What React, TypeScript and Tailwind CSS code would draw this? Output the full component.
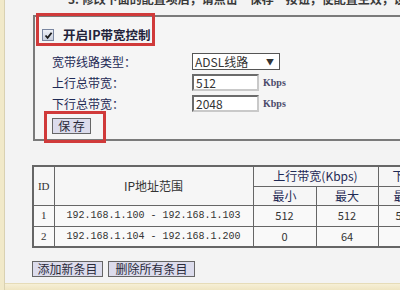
import React from 'react';

const cjk = { fontFamily: '"Noto Sans CJK SC", "Noto Sans", sans-serif' };
const mono = { fontFamily: '"Liberation Mono", "Noto Sans CJK SC", monospace' };
const serif = { fontFamily: '"Liberation Serif", "Noto Sans CJK SC", serif' };

function Checkbox() {
  return (
    <span className="flex h-[12px] w-[12px] items-center justify-center border border-[#7a86a0] bg-gradient-to-b from-[#eef0f6] to-[#c9cfdd]">
      <svg width="9" height="9" viewBox="0 0 9 9">
        <path d="M1.5 4.5 L3.6 6.8 L7.6 1.8" fill="none" stroke="#1b1b1b" strokeWidth="1.8" />
      </svg>
    </span>
  );
}

function TextInput({ value }: { value: string }) {
  return (
    <div className="flex h-[17px] w-[67px] items-center border-2 border-t-[#6b6b6b] border-l-[#6b6b6b] border-r-[#c9c9c9] border-b-[#c9c9c9] bg-white pl-[2px] text-[12px] text-[#333]" style={cjk}>
      {value}
    </div>
  );
}

function Btn({ label, className = '' }: { label: string; className?: string }) {
  return (
    <div className={`flex h-[16px] items-center justify-center border border-[#666] bg-[#dcdcec] text-[12px] leading-none text-[#2a2a3a] ${className}`} style={cjk}>
      {label}
    </div>
  );
}

const rows = [
  { id: '1', range: '192.168.1.100 - 192.168.1.103', min: '512', max: '512', next: '512' },
  { id: '2', range: '192.168.1.104 - 192.168.1.200', min: '0', max: '64', next: '' },
];

export default function App() {
  return (
    <div className="relative flex h-[290px] w-[400px] overflow-hidden bg-[#f3f3f3]">
      {/* left beige edge */}
      <div className="h-full w-[5px] shrink-0 border-r border-[#d9d1b2] bg-[#f1e9c9]" />

      <div className="relative flex min-w-0 flex-1 flex-col">
        {/* instruction line, cut at the top */}
        <div className="-mt-[8px] h-[14px] pl-[63px] text-[12px] font-bold leading-[14px] whitespace-nowrap text-[#3a3a3a]" style={cjk}>
          3. 修改下面的配置项后，请点击“保存”按钮，使配置生效，设置完成后点击保存
        </div>

        {/* settings panel */}
        <div className="relative ml-[28px] mt-[9px] h-[126px] border-t-2 border-l-2 border-b-2 border-[#7a7a7a] bg-[#f5f5f5]">
          <div className="flex items-center gap-[9px] pl-[7px] pt-[9px]">
            <Checkbox />
            <span className="text-[12.5px] font-bold text-[#23233a]" style={cjk}>开启IP带宽控制</span>
          </div>

          <div className="mt-[8px] flex flex-col gap-[3px] pl-[17px]">
            <div className="flex h-[18px] items-center">
              <span className="w-[140px] text-[12px] text-[#1f2a55]" style={cjk}>宽带线路类型：</span>
              <div className="flex h-[17px] w-[88px] items-center justify-between border border-[#555] bg-white pl-[2px] pr-[5px] text-[12px] text-[#333]" style={cjk}>
                <span>ADSL线路</span>
                <span className="text-[8px]">▼</span>
              </div>
            </div>
            <div className="flex h-[18px] items-center">
              <span className="w-[140px] text-[12px] text-[#1f2a55]" style={cjk}>上行总带宽：</span>
              <TextInput value="512" />
              <span className="ml-[4px] text-[10px] font-bold text-[#4a4a6a]" style={serif}>Kbps</span>
            </div>
            <div className="flex h-[18px] items-center">
              <span className="w-[140px] text-[12px] text-[#1f2a55]" style={cjk}>下行总带宽：</span>
              <TextInput value="2048" />
              <span className="ml-[4px] text-[10px] font-bold text-[#4a4a6a]" style={serif}>Kbps</span>
            </div>
          </div>

          <div className="mt-[5px] pl-[17px]">
            <Btn label="保 存" className="w-[39px]" />
          </div>
        </div>

        {/* rules table */}
        <div className="ml-[27px] mt-[24px] w-[450px]">
          <table className="w-[450px] table-fixed border-collapse border-2 border-[#666] text-[11px] text-[#333]">
            <colgroup>
              <col className="w-[21px]" />
              <col className="w-[199px]" />
              <col className="w-[63px]" />
              <col className="w-[62px]" />
              <col className="w-[42px]" />
              <col />
            </colgroup>
            <thead>
              <tr className="h-[20px]">
                <th rowSpan={2} className="border border-[#666] bg-[#f6f6f6] font-normal" style={serif}>ID</th>
                <th rowSpan={2} className="border border-[#666] bg-[#f6f6f6] text-[12px] font-normal" style={cjk}>IP地址范围</th>
                <th colSpan={2} className="border border-[#666] bg-[#f6f6f6] text-[12px] font-normal text-[#1f2a55]" style={cjk}>上行带宽(Kbps)</th>
                <th colSpan={2} className="border border-[#666] bg-[#f6f6f6] pl-[14px] text-left text-[12px] font-normal text-[#1f2a55]" style={cjk}>下行带宽(Kbps)</th>
              </tr>
              <tr className="h-[19px]">
                <th className="border border-[#666] bg-[#f6f6f6] text-[12px] font-normal text-[#1f2a55]" style={cjk}>最小</th>
                <th className="border border-[#666] bg-[#f6f6f6] text-[12px] font-normal text-[#1f2a55]" style={cjk}>最大</th>
                <th className="border border-[#666] bg-[#f6f6f6] pl-[15px] text-left text-[12px] font-normal text-[#1f2a55]" style={cjk}>最小</th>
                <th className="border border-[#666] bg-[#f6f6f6] text-[12px] font-normal text-[#1f2a55]" style={cjk}>最大</th>
              </tr>
            </thead>
            <tbody>
              {rows.map((r) => (
                <tr key={r.id} className="h-[21px]">
                  <td className="border border-[#666] bg-[#f9f9f9] text-center" style={serif}>{r.id}</td>
                  <td className="border border-[#666] bg-[#f9f9f9] text-center text-[10px]" style={mono}>{r.range}</td>
                  <td className="border border-[#666] bg-[#f9f9f9] text-center" style={cjk}>{r.min}</td>
                  <td className="border border-[#666] bg-[#f9f9f9] text-center" style={cjk}>{r.max}</td>
                  <td className="border border-[#666] bg-[#f9f9f9] pl-[17px] whitespace-nowrap" style={cjk}>{r.next}</td>
                  <td className="border border-[#666] bg-[#f9f9f9]" />
                </tr>
              ))}
            </tbody>
          </table>
        </div>

        {/* action buttons */}
        <div className="ml-[27px] mt-[13px] flex gap-[5px]">
          <Btn label="添加新条目" className="w-[71px]" />
          <Btn label="删除所有条目" className="w-[87px]" />
        </div>

        {/* bottom beige band */}
        <div className="mt-auto h-[7px] border-t border-[#e6dcb8] bg-gradient-to-b from-[#f6efd6] to-[#efe5c2]" />

        {/* red annotation boxes */}
        <div className="absolute left-[31px] top-[13px] h-[33px] w-[119px] border-[3px] border-[#d03a3a]" />
        <div className="absolute left-[39px] top-[111px] h-[32px] w-[62px] border-[3px] border-[#d03a3a]" />
      </div>
    </div>
  );
}
